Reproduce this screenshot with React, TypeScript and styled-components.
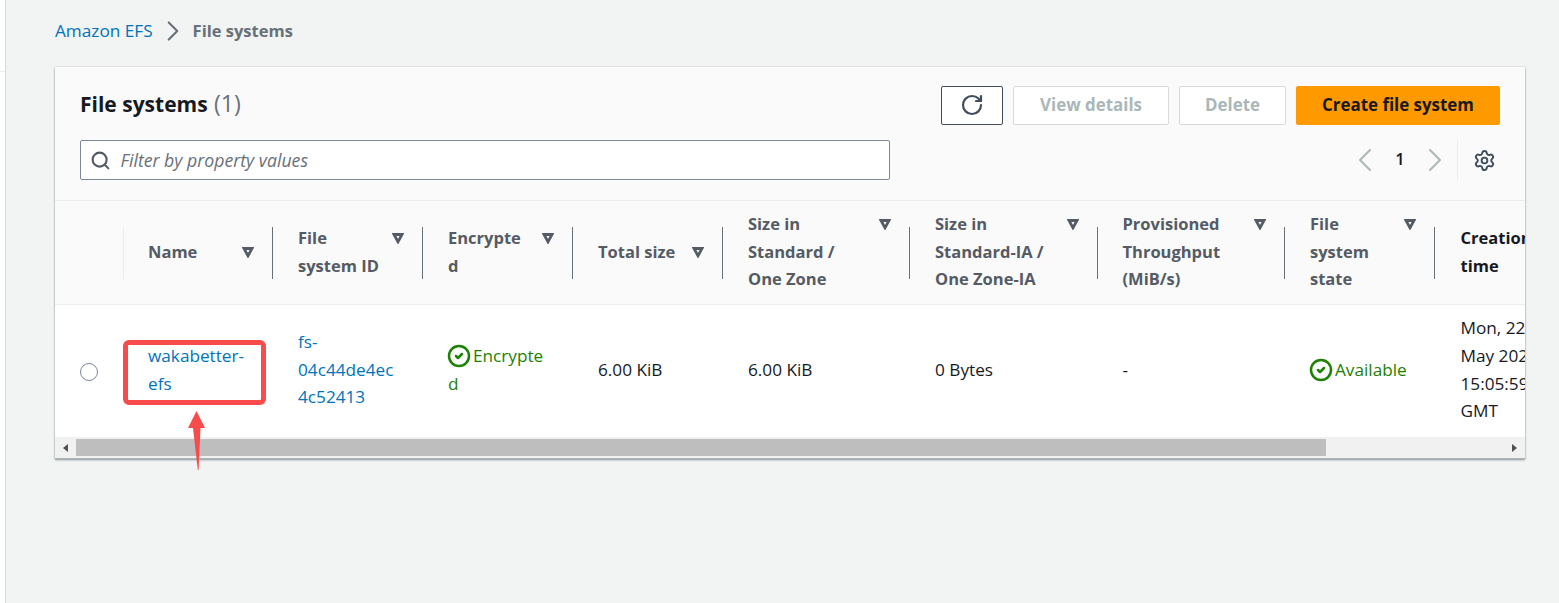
import React from "react";
import styled, { createGlobalStyle } from "styled-components";
import { ChevronLeft, ChevronRight, CircleCheck, RotateCw, Search, Settings } from "lucide-react";

const Global = createGlobalStyle`
  html, body { margin: 0; padding: 0; height: 100%; overflow: hidden; background: #f2f3f3; }
  #root { height: 100%; }
  * { box-sizing: border-box; }
`;

const Page = styled.div`
  display: flex;
  width: 1559px;
  height: 603px;
  font-family: "Open Sans", "Noto Sans", sans-serif;
  font-size: 17.2px;
  color: #16191f;
  overflow: hidden;
`;
const Rail = styled.div`
  width: 6px;
  flex: none;
  background: #fff;
  border-right: 1px solid #d5dbdb;
  &::after { content: ""; display: block; margin-top: 71px; height: 1px; background: #eaeded; }
`;
const Main = styled.main`
  flex: 1;
  min-width: 0;
  padding: 0 34px 0 49px;
`;
const Breadcrumbs = styled.nav`
  height: 67px;
  padding-bottom: 6px;
  display: flex;
  align-items: center;
  gap: 3px;
`;
const Crumb = styled.a`
  color: #0073bb;
  font-size: 17.2px;
`;
const CurrentCrumb = styled.span`
  color: #687078;
  font-weight: 700;
  font-size: 16.5px;
`;
const Card = styled.section`
  position: relative;
  width: 1470px;
  background: #fff;
  box-shadow: 0 1px 2px rgba(0, 28, 36, 0.4), 0 0 1px rgba(0, 28, 36, 0.3);
`;
const CardTop = styled.div`
  background: #fafafa;
  height: 134px;
  padding: 19px 25px 20px;
  border-bottom: 1px solid #eaeded;
  display: flex;
  flex-direction: column;
  gap: 15px;
`;
const TopRow = styled.div`
  display: flex;
  align-items: center;
  justify-content: space-between;
`;
const Title = styled.h2`
  margin: 0;
  padding-bottom: 6px;
  font-size: 21px;
  font-weight: 700;
  color: #16191f;
`;
const Count = styled.span`
  font-weight: 400;
  font-size: 23px;
  margin-left: 1px;
  color: #687078;
`;
const Actions = styled.div`
  display: flex;
  gap: 10px;
`;
const Button = styled.button<{ $w: number; $variant?: "normal" | "disabled" | "primary" }>`
  width: ${(p) => p.$w}px;
  height: 39px;
  display: flex;
  align-items: center;
  justify-content: center;
  border-radius: 2px;
  font-family: inherit;
  font-size: 16.9px;
  font-weight: 700;
  padding: 0 0 2px;
  border: 1px solid
    ${(p) => (p.$variant === "primary" ? "#ff9900" : p.$variant === "disabled" ? "#d5dbdb" : "#414d5c")};
  background: ${(p) => (p.$variant === "primary" ? "#ff9900" : "#fff")};
  color: ${(p) => (p.$variant === "disabled" ? "#aab7b8" : "#16191f")};
`;
const FilterBox = styled.div`
  width: 810px;
  height: 40px;
  background: #fff;
  border: 1px solid #7d8998;
  border-radius: 2px;
  display: flex;
  align-items: center;
  gap: 10px;
  padding-left: 8.5px;
  color: #687078;
  font-style: italic;
  font-size: 17.7px;
`;
const Pager = styled.div`
  display: flex;
  align-items: center;
  height: 40px;
  padding-right: 4px;
  color: #aab7b8;
`;
const PageNum = styled.span`
  width: 30px;
  text-align: center;
  color: #16191f;
  font-size: 16.5px;
  font-weight: 600;
  padding-bottom: 4px;
`;
const PagerDivider = styled.span`
  width: 1px;
  height: 40px;
  background: #eaeded;
  margin: 0 15px 0 2px;
`;
const Row = styled.div`
  display: grid;
  grid-template-columns: 68px 149px 150px 150px 150px 187px 187.5px 187.5px 149.5px 91.5px;
  width: 1470px;
`;
const HeaderRow = styled(Row)`
  height: 104px;
  background: #fafafa;
  border-bottom: 1px solid #eaeded;
`;
const BodyRow = styled(Row)`
  height: 132px;
  background: #fff;
`;
const HeadCell = styled.div<{ $light?: boolean; $sorted?: boolean }>`
  position: relative;
  display: flex;
  align-items: center;
  padding-left: ${(p) => (p.$sorted ? "27px" : p.$light ? "25px" : "26px")};
  padding-bottom: 2px;
  font-weight: 700;
  font-size: 16.5px;
  line-height: 27.6px;
  white-space: nowrap;
  overflow: ${(p) => (p.$sorted ? "hidden" : "visible")};
  color: ${(p) => (p.$sorted ? "#16191f" : "#545b64")};
  &::before {
    content: "";
    position: absolute;
    left: 0;
    top: 26px;
    height: 52px;
    width: 1px;
    background: ${(p) => (p.$light ? "#eaeded" : "#687078")};
  }
`;
const CaretBox = styled.svg<{ $top: number }>`
  position: absolute;
  right: 18px;
  top: ${(p) => p.$top}px;
  width: 12px;
  height: 11px;
`;
const Cell = styled.div<{ $inset?: number }>`
  display: flex;
  align-items: center;
  padding-left: ${(p) => p.$inset ?? 26}px;
  padding-bottom: 3px;
  font-size: 17.2px;
  line-height: 27.7px;
  white-space: nowrap;
  overflow: hidden;
  color: #16191f;
`;
const Link = styled.a`
  color: #0073bb;
`;
const Status = styled.div`
  color: #1d8102;
  display: block;
`;
const StatusIcon = styled(CircleCheck)`
  vertical-align: middle;
  margin: -4px 2px -2px -1px;
`;
const Radio = styled.span`
  width: 18px;
  height: 18px;
  border-radius: 50%;
  border: 1px solid #7d8998;
  background: #fff;
  margin-top: 5px;
`;
const Scrollbar = styled.div`
  height: 22px;
  background: #f1f1f1;
  display: flex;
  align-items: center;
  border-bottom: 1px solid #aab7b8;
`;
const ScrollArrow = styled.span<{ $dir: "left" | "right" }>`
  width: 21px;
  flex: none;
  display: flex;
  justify-content: center;
  &::before {
    content: "";
    border-style: solid;
    border-width: 4.5px 0 4.5px 5px;
    border-color: transparent transparent transparent #505050;
    transform: ${(p) => (p.$dir === "left" ? "scaleX(-1)" : "none")};
  }
`;
const Thumb = styled.div`
  width: 1250px;
  height: 17px;
  background: #bebebe;
`;
const Track = styled.div`
  flex: 1;
`;
const Highlight = styled.div`
  position: absolute;
  left: 68px;
  top: 273px;
  width: 143px;
  height: 65px;
  border: 5px solid #f84c4c;
  border-radius: 6px;
`;
const Arrow = styled.svg`
  position: absolute;
  left: 133px;
  top: 344px;
  width: 18px;
  height: 59px;
`;

const Caret = ({ top = 46 }: { top?: number }) => (
  <CaretBox $top={top} viewBox="0 0 12 11">
    <polygon points="2,1.5 10,1.5 6,8.8" fill="#fafafa" stroke="#545b64" strokeWidth="2.8" strokeLinejoin="miter" />
  </CaretBox>
);

export default function App() {
  return (
    <Page>
      <Global />
      <Rail />
      <Main>
        <Breadcrumbs>
          <Crumb>Amazon EFS</Crumb>
          <ChevronRight size={34} color="#687078" strokeWidth={1.5} />
          <CurrentCrumb>File systems</CurrentCrumb>
        </Breadcrumbs>
        <Card>
          <CardTop>
            <TopRow>
              <Title>
                File systems <Count>(1)</Count>
              </Title>
              <Actions>
                <Button $w={62}>
                  <RotateCw size={24} color="#414d5c" strokeWidth={2.2} />
                </Button>
                <Button $w={156} $variant="disabled">View details</Button>
                <Button $w={107} $variant="disabled">Delete</Button>
                <Button $w={204} $variant="primary">Create file system</Button>
              </Actions>
            </TopRow>
            <TopRow>
              <FilterBox>
                <Search size={21} color="#545b64" strokeWidth={2.4} />
                Filter by property values
              </FilterBox>
              <Pager>
                <ChevronLeft size={40} strokeWidth={1.2} />
                <PageNum>1</PageNum>
                <ChevronRight size={40} strokeWidth={1.2} />
                <PagerDivider />
                <Settings size={23} color="#414d5c" strokeWidth={2} />
              </Pager>
            </TopRow>
          </CardTop>
          <HeaderRow>
            <div />
            <HeadCell $light>Name<Caret /></HeadCell>
            <HeadCell><div>File<br />system ID</div><Caret top={32} /></HeadCell>
            <HeadCell><div>Encrypte<br />d</div><Caret top={32} /></HeadCell>
            <HeadCell>Total size<Caret /></HeadCell>
            <HeadCell><div>Size in<br />Standard /<br />One Zone</div><Caret top={18} /></HeadCell>
            <HeadCell><div>Size in<br />Standard-IA /<br />One Zone-IA</div><Caret top={18} /></HeadCell>
            <HeadCell><div>Provisioned<br />Throughput<br />(MiB/s)</div><Caret top={18} /></HeadCell>
            <HeadCell><div>File<br />system<br />state</div><Caret top={18} /></HeadCell>
            <HeadCell $sorted><div>Creation<br />time</div></HeadCell>
          </HeaderRow>
          <BodyRow>
            <Cell $inset={25}><Radio /></Cell>
            <Cell $inset={25}><Link>wakabetter-<br />efs</Link></Cell>
            <Cell><Link>fs-<br />04c44de4ec<br />4c52413</Link></Cell>
            <Cell><Status><StatusIcon size={24} strokeWidth={2.5} />Encrypte<br />d</Status></Cell>
            <Cell>6.00 KiB</Cell>
            <Cell>6.00 KiB</Cell>
            <Cell>0 Bytes</Cell>
            <Cell>-</Cell>
            <Cell><Status><StatusIcon size={24} strokeWidth={2.5} />Available</Status></Cell>
            <Cell $inset={27}><div>Mon, 22<br />May 2023<br />15:05:59<br />GMT</div></Cell>
          </BodyRow>
          <Scrollbar>
            <ScrollArrow $dir="left" />
            <Thumb />
            <Track />
            <ScrollArrow $dir="right" />
          </Scrollbar>
          <Highlight />
          <Arrow viewBox="0 0 18 59">
            <polygon points="8.5,0 17,17 12.5,17 10.6,59 9.8,59 5,17 0,17" fill="#f84c4c" />
          </Arrow>
        </Card>
      </Main>
    </Page>
  );
}
